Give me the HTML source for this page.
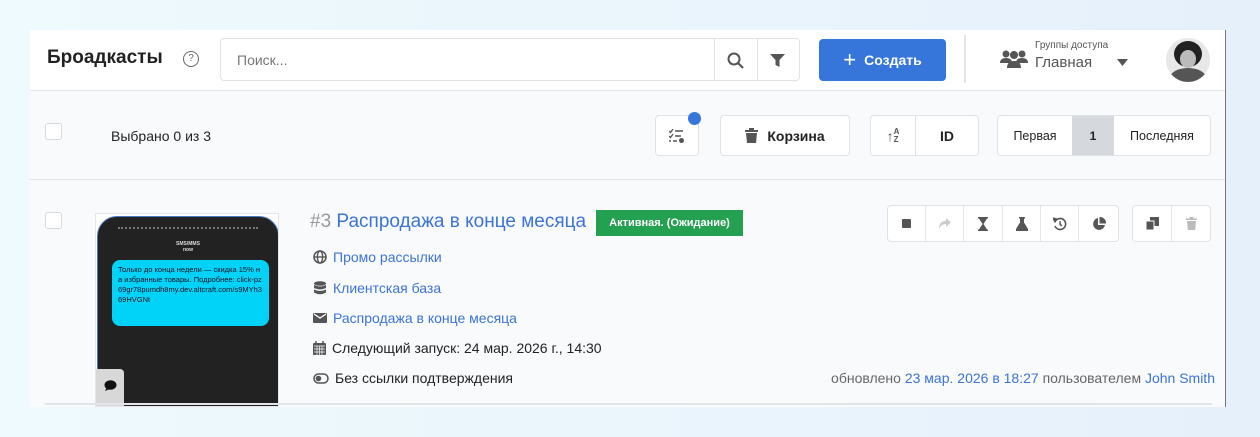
<!DOCTYPE html>
<html><head><meta charset="utf-8"><style>
*{box-sizing:border-box;margin:0;padding:0}
body{width:1260px;height:437px;overflow:hidden;background:linear-gradient(90deg,#eefafd,#e6f0fb);font-family:"Liberation Sans",sans-serif;position:relative;color:#222}
.panel{position:absolute;left:30px;top:30px;width:1196px;height:377px;background:#f9fafc;border-right:1px solid #777}
.hdr{position:absolute;left:0;top:0;width:1195px;height:61px;background:#fff;border-bottom:1px solid #e1e4e8}
.abs{position:absolute}
.btn{position:absolute;border:1px solid #dfe2e6;border-radius:4px;background:#fff;display:flex;align-items:center;justify-content:center;font-size:13px}
.lnk{color:#3b74d4}
.li{position:absolute;left:283px;font-size:14px;display:flex;align-items:center;gap:6px}
.cb{position:absolute;width:17px;height:17px;border:1px solid #d6d9de;border-radius:3px;background:#fff}
</style></head><body>
<div class="panel">
 <div class="hdr">
  <div class="abs" style="left:17px;top:17px;font-size:19px;font-weight:bold;color:#222">Броадкасты</div>
  <div class="abs" style="left:153px;top:21px;width:16px;height:16px;border:1.5px solid #666;border-radius:50%;font-size:10px;text-align:center;line-height:13px;color:#666">?</div>
  <div class="btn" style="left:190px;top:8px;width:580px;height:43px;justify-content:flex-start;padding-left:16px;color:#777;font-size:14px">Поиск...</div>
  <div class="abs" style="left:684px;top:9px;width:1px;height:41px;background:#dfe2e6"></div>
  <div class="abs" style="left:727px;top:9px;width:1px;height:41px;background:#dfe2e6"></div>
  <svg class="abs" style="left:697px;top:22px" width="17" height="17" viewBox="0 0 17 17"><circle cx="7" cy="7" r="5.5" fill="none" stroke="#555" stroke-width="2"/><path d="M11 11l5 5" stroke="#555" stroke-width="2.2"/></svg>
  <svg class="abs" style="left:740px;top:23px" width="15" height="15" viewBox="0 0 15 15"><path d="M0 1h15l-5.5 6v7l-4-2V7z" fill="#555"/></svg>
  <div class="btn" style="left:789px;top:9px;width:127px;height:42px;background:#3676db;border-color:#3676db;color:#fff;font-weight:bold;font-size:14px"><span style="font-size:22px;font-weight:normal;margin-right:8px;line-height:1">+</span>Создать</div>
  <div class="abs" style="left:934px;top:5px;width:2px;height:48px;background:#e1e4e8"></div>
  <svg class="abs" style="left:970px;top:19px" width="28" height="20" viewBox="0 0 28 20"><circle cx="6" cy="5" r="3.5" fill="#555"/><circle cx="22" cy="5" r="3.5" fill="#555"/><circle cx="14" cy="6" r="4" fill="#555"/><path d="M0 14q0-5 6-5t6 5zM16 14q0-5 6-5t6 5zM7 19q0-7 7-7t7 7z" fill="#555"/></svg>
  <div class="abs" style="left:1005px;top:10px;font-size:10px;color:#555">Группы доступа</div>
  <div class="abs" style="left:1005px;top:24px;font-size:15px;color:#555">Главная</div>
  <svg class="abs" style="left:1087px;top:29px" width="11" height="7"><path d="M0 0h11L5.5 7z" fill="#555"/></svg>
  <div class="abs" style="left:1136px;top:8px;width:44px;height:44px;border-radius:50%;overflow:hidden;background:#e8e8e8">
   <div class="abs" style="left:8px;top:3px;width:28px;height:26px;border-radius:50%;background:#222"></div>
   <div class="abs" style="left:14px;top:12px;width:16px;height:18px;border-radius:50%;background:#bbb"></div>
   <div class="abs" style="left:4px;top:30px;width:36px;height:20px;border-radius:50% 50% 0 0;background:#555"></div>
  </div>
 </div>
 <div class="cb" style="left:15px;top:93px"></div>
 <div class="abs" style="left:81px;top:98px;font-size:14px">Выбрано 0 из 3</div>
 <div class="btn" style="left:625px;top:85px;width:44px;height:41px"><svg width="16" height="14" viewBox="0 0 16 14"><path d="M0 2l1.5 1.5L4 0M0 7l1.5 1.5L4 5" stroke="#555" fill="none" stroke-width="1.3"/><path d="M6 2h8M6 7h6M0 12h2M4 12h4" stroke="#555" stroke-width="1.6"/><circle cx="12.5" cy="11.5" r="2.5" fill="#555"/></svg></div>
 <div class="abs" style="left:658px;top:82px;width:13px;height:13px;border-radius:50%;background:#3676db"></div>
 <div class="btn" style="left:690px;top:85px;width:130px;height:41px;font-weight:bold;font-size:14px"><svg width="13" height="15" viewBox="0 0 13 15" style="margin-right:9px"><path d="M0 2h13v2H0zM4 0h5v2H4zM1 5h11l-1 10H2z" fill="#555"/></svg>Корзина</div>
 <div class="btn" style="left:840px;top:85px;width:109px;height:41px;justify-content:flex-start"><div style="width:45px;height:39px;border-right:1px solid #dfe2e6;display:flex;align-items:center;justify-content:center;font-size:14px;color:#555;font-weight:bold">↑<span style="font-size:8px;line-height:8px">A<br>Z</span></div><div style="flex:1;text-align:center;font-weight:bold;font-size:14px">ID</div></div>
 <div class="btn" style="left:967px;top:85px;width:214px;height:41px;justify-content:flex-start;overflow:hidden"><div style="width:74px;text-align:center;font-size:12.5px">Первая</div><div style="width:42px;height:41px;background:#d5d8dc;display:flex;align-items:center;justify-content:center;font-weight:bold;font-size:12px">1</div><div style="flex:1;text-align:center;font-size:12.5px">Последняя</div></div>
 <div class="abs" style="left:0;top:149px;width:1195px;height:1px;background:#e1e4e8"></div>
 <!-- row -->
 <div class="cb" style="left:15px;top:182px"></div>
 <div class="abs" style="left:65px;top:183px;width:184px;height:194px;background:#fff;border:1px solid #e4e6ea;overflow:hidden">
  <div class="abs" style="left:1px;top:2px;width:182px;height:200px;background:#222;border-radius:20px 20px 0 0;border:1px solid #4a78c8"></div>
  <div class="abs" style="left:22px;top:13px;width:140px;height:4px;border-top:2px dotted #777"></div>
  <div class="abs" style="left:0;top:27px;width:184px;text-align:center;color:#ddd;font-size:5px;font-weight:bold">SMS/MMS<br>now</div>
  <div class="abs" style="left:16px;top:46px;width:157px;height:66px;background:#00d3f7;border-radius:8px;font-size:7.5px;line-height:10px;padding:5px 6px;color:#112;word-break:break-all">Только до конца недели — скидка 15% на избранные товары. Подробнее: click-pz69gr78pumdh8my.dev.altcraft.com/s9MYh369HVGNt</div>
  <div class="abs" style="left:0;top:155px;width:28px;height:40px;background:#d8d8d8;border-radius:0 4px 0 0"></div>
  <svg class="abs" style="left:8px;top:166px" width="13" height="12" viewBox="0 0 13 12"><ellipse cx="6.5" cy="5" rx="6" ry="4.8" fill="#111"/><path d="M1 11l2-4 3 2z" fill="#111"/></svg>
 </div>
 <div class="abs" style="left:280px;top:181px;font-size:19px;white-space:nowrap"><span style="color:#999">#3</span> <span class="lnk">Распродажа в конце месяца</span></div>
 <div class="abs" style="left:566px;top:180px;width:147px;height:26px;background:#23a050;color:#fff;font-size:11px;font-weight:bold;display:flex;align-items:center;justify-content:center">Активная. (Ожидание)</div>
 <div class="li" style="top:219px"><svg width="14" height="14" viewBox="0 0 14 14"><circle cx="7" cy="7" r="6" fill="none" stroke="#555" stroke-width="1.6"/><ellipse cx="7" cy="7" rx="2.6" ry="6" fill="none" stroke="#555" stroke-width="1.4"/><path d="M1 7h12" stroke="#555" stroke-width="1.4"/></svg><span class="lnk">Промо рассылки</span></div>
 <div class="li" style="top:250px"><svg width="14" height="14" viewBox="0 0 14 14"><ellipse cx="7" cy="2.5" rx="6" ry="2.3" fill="#555"/><path d="M1 4q6 3 12 0v3q-6 3-12 0zM1 8.5q6 3 12 0v3q-6 3.5-12 0z" fill="#555"/></svg><span class="lnk">Клиентская база</span></div>
 <div class="li" style="top:280px"><svg width="14" height="12" viewBox="0 0 14 12"><rect x="0" y="1" width="14" height="10" rx="1" fill="#555"/><path d="M1 2l6 4 6-4" stroke="#fff" fill="none" stroke-width="1.3"/></svg><span class="lnk">Распродажа в конце месяца</span></div>
 <div class="li" style="top:310px"><svg width="13" height="14" viewBox="0 0 13 14"><rect x="0" y="2" width="13" height="12" rx="1" fill="#555"/><path d="M3 0v3M10 0v3" stroke="#555" stroke-width="1.5"/><path d="M1 5h11M1 8h11M1 11h11M4 5v9M6.5 5v9M9 5v9" stroke="#fff" stroke-width=".7"/></svg><span>Следующий запуск: 24 мар. 2026 г., 14:30</span></div>
 <div class="li" style="top:340px"><svg width="16" height="11" viewBox="0 0 16 11"><rect x="1" y="1" width="14" height="9" rx="4.5" fill="none" stroke="#555" stroke-width="1.5"/><circle cx="5.5" cy="5.5" r="2.8" fill="#555"/></svg><span>Без ссылки подтверждения</span></div>
 <div class="btn" style="left:857px;top:175px;width:232px;height:37px;justify-content:flex-start">
  <div style="width:38px;display:flex;justify-content:center;border-right:1px solid #e4e6ea;height:35px;align-items:center"><div style="width:9px;height:9px;background:#555;border-radius:1px"></div></div>
  <div style="width:38px;display:flex;justify-content:center;border-right:1px solid #e4e6ea;height:35px;align-items:center"><svg width="12" height="11" viewBox="0 0 12 11"><path d="M7 0l5 4.5L7 9V6Q2 6 0 11q0-8 7-8z" fill="#ccc"/></svg></div>
  <div style="width:39px;display:flex;justify-content:center;border-right:1px solid #e4e6ea;height:35px;align-items:center"><svg width="10" height="14" viewBox="0 0 10 14"><path d="M0 0h10v1.5H9L5.5 7 9 12.5h1V14H0v-1.5h1L4.5 7 1 1.5H0z" fill="#555"/></svg></div>
  <div style="width:38px;display:flex;justify-content:center;border-right:1px solid #e4e6ea;height:35px;align-items:center"><svg width="12" height="14" viewBox="0 0 12 14"><path d="M3 0h6v1.5H8v4l4 6.5V14H0v-2l4-6.5v-4H3z" fill="#555"/></svg></div>
  <div style="width:38px;display:flex;justify-content:center;border-right:1px solid #e4e6ea;height:35px;align-items:center"><svg width="14" height="14" viewBox="0 0 14 14"><path d="M2.5 4A5.5 5.5 0 1 1 2 9" fill="none" stroke="#555" stroke-width="1.6"/><path d="M0 1l4 1-2 3zM7 4v3.5l2 1.5" fill="#555" stroke="#555" stroke-width="1.3"/></svg></div>
  <div style="flex:1;display:flex;justify-content:center;height:35px;align-items:center"><svg width="14" height="14" viewBox="0 0 14 14"><path d="M6 1A6 6 0 1 0 13 8H6z" fill="#555"/><path d="M7.5 0A6 6 0 0 1 14 6.5H7.5z" fill="#555"/></svg></div>
 </div>
 <div class="btn" style="left:1102px;top:175px;width:79px;height:37px;justify-content:flex-start">
  <div style="width:39px;display:flex;justify-content:center;border-right:1px solid #e4e6ea;height:35px;align-items:center"><svg width="13" height="13" viewBox="0 0 13 13"><rect x="4" y="0" width="9" height="9" fill="#555"/><rect x="0" y="4" width="8" height="9" fill="#555" stroke="#fff" stroke-width="1"/></svg></div>
  <div style="flex:1;display:flex;justify-content:center;height:35px;align-items:center"><svg width="11" height="13" viewBox="0 0 11 13"><path d="M0 1.5h11v1.5H0zM3.5 0h4v1.5h-4zM1 4h9l-.8 9H1.8z" fill="#bbb"/></svg></div>
 </div>
 <div class="abs" style="right:10px;top:340px;font-size:14px;color:#666;white-space:nowrap">обновлено <span class="lnk">23 мар. 2026 в 18:27</span> пользователем <span class="lnk">John Smith</span></div>
 <div class="abs" style="left:15px;top:373px;width:1167px;height:2px;background:#e1e4e8"></div>
</div>
</body></html>
